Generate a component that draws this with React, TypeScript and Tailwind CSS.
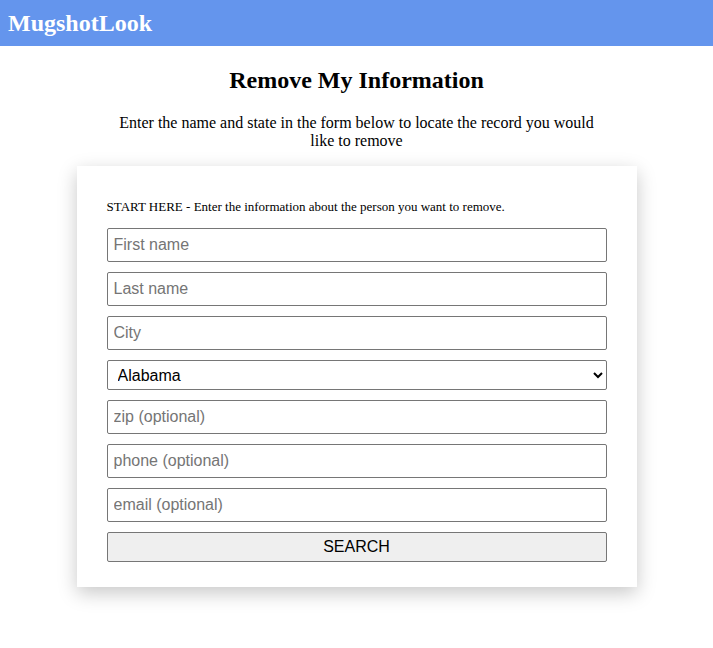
import { useState } from "react"

const states = [
  "Alabama", "Alaska", "Arizona", "Arkansas", "California", "Colorado", "Connecticut",
  "Delaware", "Florida", "Georgia", "Hawaii", "Idaho", "Illinois", "Indiana", "Iowa",
  "Kansas", "Kentucky", "Louisiana", "Maine", "Maryland", "Massachusetts", "Michigan",
  "Minnesota", "Mississippi", "Missouri", "Montana", "Nebraska", "Nevada", "New Hampshire",
  "New Jersey", "New Mexico", "New York", "North Carolina", "North Dakota", "Ohio",
  "Oklahoma", "Oregon", "Pennsylvania", "Rhode Island", "South Carolina", "South Dakota",
  "Tennessee", "Texas", "Utah", "Vermont", "Virginia", "Washington", "West Virginia",
  "Wisconsin", "Wyoming",
]

const inputClass =
  "block w-full h-[34px] mb-[10px] rounded-[2px] border border-[#767676] bg-white pl-[6px] text-[16px] text-black placeholder:text-[#757575] font-['Liberation_Sans',Arial,sans-serif] outline-none"

export default function App() {
  const [state, setState] = useState("Alabama")

  return (
    <div className="min-h-[648px] bg-white font-['Liberation_Serif','Times_New_Roman',serif] text-black">
      <header className="flex h-[46px] items-center bg-[#6495ed] pl-2">
        <span className="text-[24px] font-bold text-white">MugshotLook</span>
      </header>

      <h1 className="mt-[20px] text-center text-[24px] font-bold leading-[28px]">Remove My Information</h1>

      <p className="mx-auto mt-[20px] max-w-[500px] text-center text-[16px] leading-[18px]">
        Enter the name and state in the form below to locate the record you would like to remove
      </p>

      <form
        onSubmit={(e) => e.preventDefault()}
        className="mx-auto mt-[16px] w-[560px] bg-white px-[30px] pt-[33px] pb-[25px] shadow-[0_6px_18px_rgba(0,0,0,0.22)]"
      >
        <p className="mb-[14px] text-[13px] leading-[15px]">
          START HERE - Enter the information about the person you want to remove.
        </p>
        <input className={inputClass} placeholder="First name" />
        <input className={inputClass} placeholder="Last name" />
        <input className={inputClass} placeholder="City" />
        <select
          value={state}
          onChange={(e) => setState(e.target.value)}
          className="mb-[10px] block h-[30px] w-full rounded-[2px] border border-[#767676] bg-white pl-[6px] text-[16px] font-['Liberation_Sans',Arial,sans-serif] text-black"
        >
          {states.map((s) => (
            <option key={s} value={s}>{s}</option>
          ))}
        </select>
        <input className={inputClass} placeholder="zip (optional)" />
        <input className={inputClass} placeholder="phone (optional)" />
        <input className={inputClass} placeholder="email (optional)" />
        <button
          type="submit"
          className="block h-[30px] w-full rounded-[2px] border border-[#767676] bg-[#efefef] text-[16px] font-['Liberation_Sans',Arial,sans-serif] text-black"
        >
          SEARCH
        </button>
      </form>
    </div>
  )
}
